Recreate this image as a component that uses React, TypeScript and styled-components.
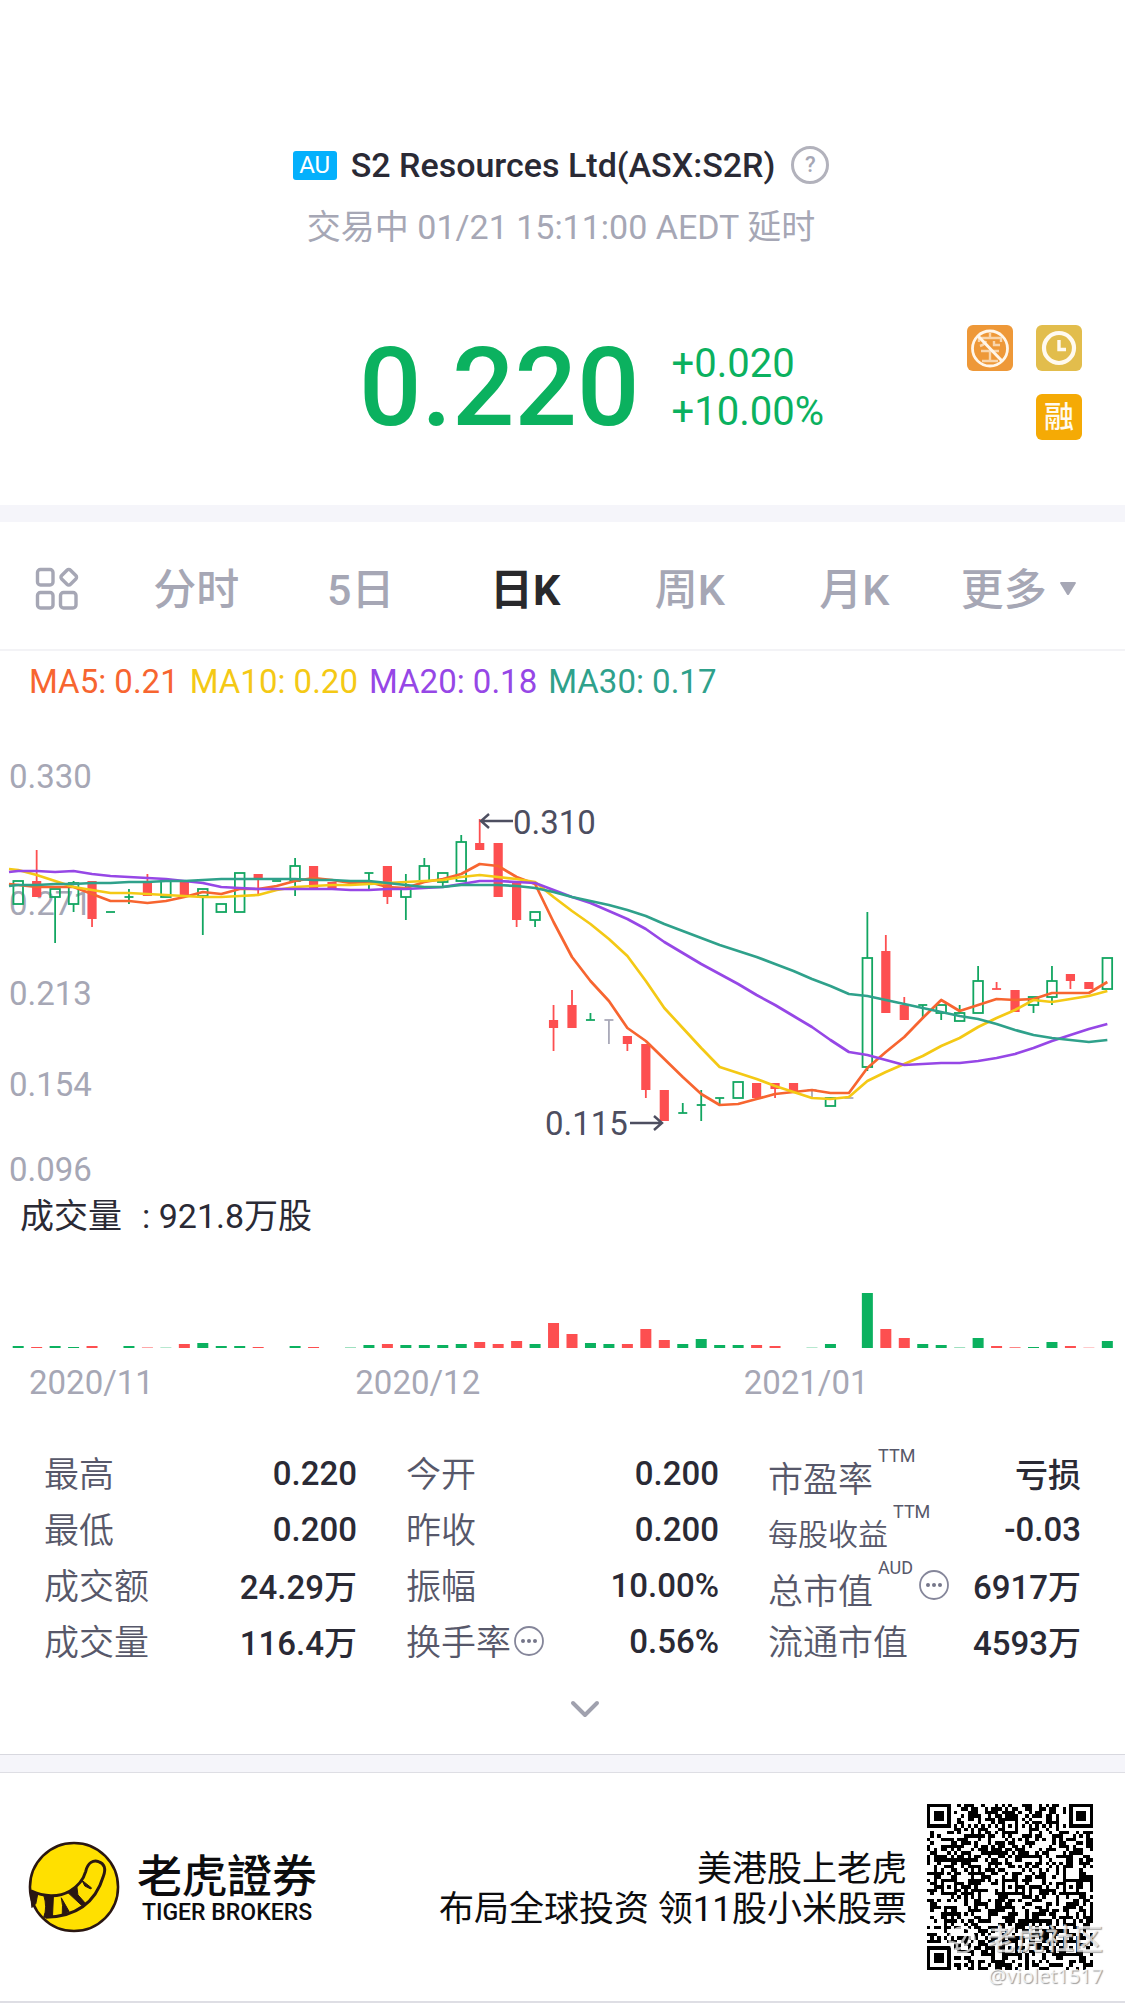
import React from "react";
import styled, { createGlobalStyle, css } from "styled-components";

const color = {
  green: "#0bb15f",
  candleGreen: "#12a661",
  red: "#fd4f50",
  ink: "#2a2a35",
  label: "#57586a",
  muted: "#a6a7b5",
  band: "#f5f5fa",
};

const GlobalStyle = createGlobalStyle`
  * { box-sizing: border-box; }
  body {
    margin: 0;
    background: #fff;
    color: ${color.ink};
    font-family: Roboto, "Noto Sans CJK SC", sans-serif;
    font-size: 33px;
  }
  button {
    font: inherit;
    color: inherit;
    background: none;
    border: 0;
    padding: 0;
    cursor: pointer;
  }
`;

/* ---------- header ---------- */

const Header = styled.header`
  padding: 140px 43px 54px 0;
`;

const TitleRow = styled.div`
  display: flex;
  align-items: center;
  justify-content: center;
  height: 50px;
  padding-left: 40px;
`;

const Market = styled.span`
  width: 44px;
  height: 29px;
  line-height: 29px;
  margin-right: 14px;
  border-radius: 3px;
  background: #04b0fc;
  color: #fff;
  font-size: 24px;
  text-align: center;
`;

const Name = styled.h1`
  margin: 0 16px 0 0;
  font-size: 34px;
  font-weight: 500;
`;

const HelpButton = styled.button`
  width: 38px;
  height: 38px;
  border: 3px solid #b2b2bc;
  border-radius: 50%;
  color: ${color.muted};
  font-size: 22px;
  font-weight: 500;
  line-height: 30px;
`;

const Status = styled.p`
  margin: 15px 0 0;
  padding-left: 40px;
  height: 44px;
  line-height: 44px;
  text-align: center;
  font-size: 34px;
  color: ${color.muted};
`;

const QuoteRow = styled.div`
  display: grid;
  grid-template-columns: 1fr auto 258px;
  align-items: start;
  margin-top: 76px;
`;

const Quote = styled.div`
  grid-column: 2;
  display: flex;
  align-items: center;
  gap: 32px;
  height: 126px;
  color: ${color.green};
`;

const Price = styled.strong`
  font-size: 110px;
  line-height: 126px;
  font-weight: 500;
`;

const Change = styled.div`
  font-size: 40px;
  line-height: 48px;
`;

const Badges = styled.div`
  display: grid;
  grid-template-columns: 46px 46px;
  justify-content: end;
  gap: 23px;
`;

const Badge = styled.button<{ $bg: string; $last?: boolean }>`
  display: grid;
  place-items: center;
  width: 46px;
  height: 46px;
  border-radius: 6px;
  background: ${(p) => p.$bg};
  color: #fffaf0;
  font-size: 30px;
  font-weight: 500;
  line-height: 46px;
  ${(p) => p.$last && css`grid-column: 2;`}
`;

const Band = styled.div<{ $lined?: boolean }>`
  height: ${(p) => (p.$lined ? 19 : 17)}px;
  background: ${color.band};
  ${(p) =>
    p.$lined &&
    css`
      border-top: 1px solid #d8d8df;
      border-bottom: 1px solid #dedee4;
    `}
`;

/* ---------- period tabs ---------- */

const Tabs = styled.nav`
  display: grid;
  grid-template-columns: 114px repeat(6, 1fr);
  padding: 0 24px 0 0;
  height: 129px;
  border-bottom: 2px solid #f3f3f6;
`;

const Tab = styled.button<{ $active?: boolean }>`
  display: flex;
  align-items: center;
  justify-content: center;
  gap: 12px;
  font-size: 43px;
  font-weight: ${(p) => (p.$active ? 700 : 500)};
  color: ${(p) => (p.$active ? "#29292c" : color.muted)};
`;

const IconTab = styled(Tab)`
  padding-top: 6px;
`;

/* ---------- chart ---------- */

const Legend = styled.div`
  display: flex;
  gap: 11px;
  height: 49px;
  padding: 6px 29px 0;
  line-height: 50px;
`;

const LegendItem = styled.span<{ $tone: string }>`
  color: ${(p) => p.$tone};
`;

const Plot = styled.svg`
  display: block;
  width: 100%;
  height: auto;
`;

const PlotText = styled.text<{ $dark?: boolean }>`
  font-size: 33px;
  fill: ${(p) => (p.$dark ? "#4d4e60" : color.muted)};
`;

const VolumeTitle = styled.div`
  display: flex;
  gap: 20px;
  height: 50px;
  padding: 0 20px;
  font-size: 34px;
  line-height: 52px;
`;

const Dates = styled.div`
  display: grid;
  grid-template-columns: 326fr 388fr 381fr;
  padding-left: 29px;
  line-height: 66px;
  color: ${color.muted};
`;

/* ---------- statistics ---------- */

const Stats = styled.section`
  display: grid;
  grid-template-columns: repeat(3, 1fr);
  column-gap: 49px;
  padding: 29px 44px 0;
`;

const StatColumn = styled.dl`
  margin: 0;
`;

const Stat = styled.div`
  display: flex;
  justify-content: space-between;
  align-items: center;
  height: 56px;
`;

const StatLabel = styled.dt`
  display: flex;
  align-items: center;
  height: 56px;
  color: ${color.label};
`;

const StatText = styled.span<{ $lowered?: boolean; $small?: boolean }>`
  font-size: ${(p) => (p.$small ? 30 : 35)}px;
  font-weight: 350;
  padding-top: ${(p) => (p.$lowered ? 6 : 0)}px;
  padding-bottom: ${(p) => (p.$lowered ? 0 : 4)}px;
`;

const Unit = styled.span`
  align-self: flex-start;
  margin: 2px 3px 0 5px;
  font-size: 18px;
  line-height: 18px;
`;

const StatValue = styled.dd`
  margin: 0;
  font-weight: 500;
`;

const MoreButton = styled.button`
  display: grid;
  place-items: center;
  width: 32px;
  height: 32px;
  margin-left: 2px;
`;

const Expand = styled.button`
  display: flex;
  justify-content: center;
  align-items: center;
  width: 100%;
  height: 85px;
  padding: 0 0 5px 44px;
`;

/* ---------- footer ---------- */

const Footer = styled.footer`
  display: flex;
  align-items: center;
  height: 230px;
  padding: 0 32px 0 28px;
  border-bottom: 2px solid #dedee4;
  color: #0c0c0e;
`;

const Brand = styled.div`
  display: grid;
  margin-left: 17px;
  padding-top: 4px;
  justify-items: center;
`;

const BrandName = styled.span`
  font-family: "Noto Sans CJK TC", sans-serif;
  font-size: 45px;
  line-height: 48px;
  font-weight: 500;
`;

const BrandLatin = styled.span`
  font-size: 23px;
  line-height: 30px;
  font-weight: 500;
`;

const Slogan = styled.p`
  flex: 1;
  margin: 0 20px 0 0;
  padding-top: 5px;
  text-align: right;
  font-size: 35px;
  line-height: 40px;
`;

const QrBox = styled.div`
  position: relative;
  width: 166px;
  height: 166px;
`;

const Watermark = styled.div`
  position: absolute;
  right: -10px;
  bottom: -20px;
  display: grid;
  justify-items: end;
  color: rgba(255, 255, 255, 0.72);
  text-shadow: 1px 1px 1px rgba(90, 90, 90, 0.6);
  white-space: nowrap;
`;

const WatermarkName = styled.span`
  display: flex;
  align-items: center;
  gap: 10px;
  font-size: 29px;
  line-height: 44px;
  font-weight: 500;
`;

const WatermarkUser = styled.span`
  font-family: "Noto Sans", sans-serif;
  font-size: 20px;
  line-height: 28px;
`;

/* ---------- data ---------- */

const STEP = 18.46;
const candleX = (i: number) => 18.2 + i * STEP;

// kind, body top, body bottom, wick top, wick bottom
type Candle = ["g" | "r" | "n", number, number, number, number];

const candles: Candle[] = [
  ["g", 881, 904, 881, 904], ["r", 881, 897, 850, 897], ["g", 889, 897, 889, 943],
  ["g", 883, 904, 881, 912], ["r", 881, 919, 881, 927], ["g", 912, 912, 912, 912],
  ["g", 897, 897, 889, 904], ["r", 881, 896, 874, 896], ["g", 881, 897, 881, 897],
  ["r", 881, 896, 881, 896], ["g", 889, 896, 889, 935], ["g", 904, 912, 904, 912],
  ["g", 873, 912, 873, 912], ["r", 874, 880, 874, 896], ["g", 881, 881, 881, 881],
  ["g", 866, 881, 858, 896], ["r", 866, 889, 866, 889], ["r", 882, 889, 882, 889],
  ["g", 881, 881, 881, 881], ["g", 873, 873, 873, 889], ["r", 866, 897, 866, 904],
  ["g", 889, 897, 874, 920], ["g", 866, 881, 858, 881], ["g", 873, 882, 873, 887],
  ["g", 842, 881, 835, 881], ["r", 843, 850, 819, 850], ["r", 843, 897, 843, 897],
  ["r", 882, 920, 882, 927], ["g", 912, 920, 912, 927], ["r", 1020, 1028, 1005, 1051],
  ["r", 1005, 1028, 990, 1028], ["g", 1020, 1020, 1013, 1020], ["n", 1020, 1020, 1020, 1044],
  ["r", 1036, 1044, 1036, 1051], ["r", 1044, 1090, 1044, 1098], ["r", 1090, 1121, 1090, 1121],
  ["g", 1113, 1113, 1103, 1113], ["g", 1105, 1105, 1090, 1121], ["g", 1098, 1098, 1098, 1105],
  ["g", 1082, 1098, 1082, 1098], ["r", 1083, 1098, 1083, 1098], ["r", 1083, 1089, 1083, 1098],
  ["r", 1083, 1092, 1083, 1092], ["n", 1090, 1090, 1090, 1098], ["g", 1098, 1106, 1098, 1106],
  ["n", 1098, 1098, 1098, 1098], ["g", 958, 1067, 912, 1071], ["r", 951, 1013, 935, 1013],
  ["r", 1005, 1020, 997, 1020], ["g", 1005, 1005, 1005, 1019], ["g", 1005, 1013, 1005, 1020],
  ["g", 1013, 1021, 1005, 1021], ["g", 981, 1013, 966, 1013], ["r", 989, 989, 982, 989],
  ["r", 990, 1012, 990, 1012], ["g", 997, 1005, 997, 1013], ["g", 981, 997, 966, 1005],
  ["r", 974, 981, 974, 989], ["r", 982, 989, 982, 989], ["g", 958, 989, 958, 989],
];

const averages = [
  {
    name: "MA5", value: "0.21", tone: "#f76530",
    ys: [884, 885, 887, 887, 887, 894, 901, 901, 903, 901, 897, 892, 894, 889, 889, 886, 881, 878, 880, 883, 882, 887, 888, 882, 879, 874, 864, 866, 877, 884, 922, 957, 981, 1001, 1028, 1041, 1059, 1077, 1094, 1105, 1104, 1099, 1094, 1092, 1090, 1093, 1093, 1068, 1052, 1037, 1018, 1000, 1011, 1005, 999, 1000, 999, 993, 993, 993, 982],
  },
  {
    name: "MA10", value: "0.20", tone: "#f4c915",
    ys: [869, 870, 875, 881, 887, 890, 893, 893, 894, 895, 896, 897, 897, 896, 895, 890, 887, 886, 885, 885, 884, 883, 882, 881, 880, 877, 875, 877, 879, 882, 897, 911, 924, 939, 956, 981, 1008, 1028, 1048, 1067, 1073, 1079, 1086, 1092, 1098, 1099, 1097, 1081, 1072, 1064, 1056, 1046, 1038, 1027, 1018, 1010, 1000, 1002, 999, 996, 991],
  },
  {
    name: "MA20", value: "0.18", tone: "#9647e6",
    ys: [872, 871, 871, 872, 871, 874, 876, 877, 878, 879, 881, 883, 887, 888, 889, 889, 889, 889, 889, 890, 890, 889, 889, 888, 887, 884, 881, 881, 882, 883, 890, 897, 903, 911, 919, 929, 942, 953, 964, 974, 984, 995, 1005, 1016, 1027, 1040, 1052, 1055, 1060, 1065, 1064, 1063, 1063, 1061, 1058, 1054, 1048, 1041, 1035, 1029, 1024],
  },
  {
    name: "MA30", value: "0.17", tone: "#2fa18b",
    ys: [886, 885, 885, 884, 884, 883, 883, 882, 882, 881, 881, 880, 879, 879, 879, 879, 879, 880, 880, 881, 881, 883, 885, 887, 887, 885, 885, 885, 886, 888, 892, 897, 901, 905, 910, 916, 924, 931, 938, 945, 951, 957, 964, 971, 979, 986, 994, 996, 1000, 1004, 1008, 1012, 1016, 1019, 1024, 1030, 1035, 1038, 1040, 1042, 1040],
  },
];

const volumes = [
  2, -1, 2, 1, -2, 0, 2, -0.5, 0.3, -4, 5, 2, 2, -1, 0, 2, -1, 0, 0.4, 3,
  -4, 3, 3, 3, 4, -6, -4, -7, 4, -25, -14, 5, 4, -4, -19, -8, 4, 9, 3, 3,
  -3, -2, 0, 0.3, 4, 0, 55, -19, -10, 4, 3, 0.4, 10, -2, -0.7, 1, 6, -2, -0.3, 7,
];

const axis: [string, number][] = [
  ["0.330", 776], ["0.271", 903], ["0.213", 993], ["0.154", 1084], ["0.096", 1169],
];

const tone = { g: color.candleGreen, r: color.red, n: "#a9a9b8" };

function CandleMark({ index, data }: { index: number; data: Candle }) {
  const [kind, top, bottom, high, low] = data;
  const x = candleX(index);
  const paint = tone[kind];
  const flat = top === bottom;
  return (
    <g stroke={paint} strokeWidth={1.8} fill="none">
      {high < top && <path d={`M${x} ${high}V${top}`} />}
      {low > bottom && <path d={`M${x} ${bottom}V${low}`} />}
      {flat && <path d={`M${x - 4.5} ${top}h9`} />}
      {!flat && kind === "g" && <rect x={x - 4.8} y={top} width={9.6} height={bottom - top} />}
      {!flat && kind === "r" && (
        <rect x={x - 4.6} y={top} width={9.2} height={bottom - top} fill={paint} stroke="none" />
      )}
    </g>
  );
}

function PriceChart() {
  return (
    <Plot viewBox="0 700 1125 490" role="img" aria-label="日K">
      {axis.map(([text, y]) => (
        <PlotText key={text} x={9} y={y + 12}>{text}</PlotText>
      ))}
      {candles.map((c, i) => <CandleMark key={i} index={i} data={c} />)}
      {averages.map((m) => (
        <polyline
          key={m.name}
          points={m.ys.map((y, i) => `${i === 0 ? 9 : candleX(i - 1)},${y}`).join(" ")}
          fill="none"
          stroke={m.tone}
          strokeWidth={2.7}
          strokeLinejoin="round"
        />
      ))}
      <g fill="none" stroke="#4d4e60" strokeWidth={2.4}>
        <path d="M513 821H481M489 814l-8 7 8 7" />
        <path d="M630 1123h32M654 1116l8 7-8 7" />
      </g>
      <PlotText $dark x={513} y={834}>0.310</PlotText>
      <PlotText $dark x={545} y={1135}>0.115</PlotText>
    </Plot>
  );
}

function VolumeChart() {
  return (
    <Plot viewBox="0 0 1125 110" role="img" aria-label="成交量">
      {volumes.map((v, i) => (
        <rect
          key={i}
          x={candleX(i) - 5.5}
          y={108 - Math.abs(v)}
          width={11}
          height={Math.abs(v)}
          fill={v < 0 ? color.red : color.green}
        />
      ))}
    </Plot>
  );
}

/* ---------- icons ---------- */

const GridIcon = () => (
  <svg width="46" height="46" viewBox="0 0 46 46" fill="none" stroke={color.muted} strokeWidth="3.4">
    <rect x="3.5" y="3.5" width="15.5" height="15.5" rx="3" />
    <rect x="3.5" y="26.5" width="15.5" height="15.5" rx="3" />
    <rect x="26.5" y="26.5" width="15.5" height="15.5" rx="3" />
    <rect x="28.5" y="5" width="12.500" height="12.500" rx="2.500" transform="rotate(45 34.750 11.250)" />
  </svg>
);

const NoShortIcon = () => (
  <svg width="46" height="46" viewBox="0 0 46 46" fill="none" stroke="#fff6ea">
    <g strokeWidth="2.4" opacity="0.65">
      <path d="M23 8v4M12 17v-4h22v4M19 16c-1 3-3 4-6 5M27 16v4h6M14 26h18M23 26v10M15 36h16" />
    </g>
    <circle cx="23" cy="23.500" r="17.500" strokeWidth="2.800" />
    <path d="M11 11l24 25" strokeWidth="3" />
  </svg>
);

const ClockIcon = () => (
  <svg width="46" height="46" viewBox="0 0 46 46" fill="none" stroke="#fffaf0">
    <circle cx="23" cy="23" r="15" strokeWidth="4.200" />
    <path d="M23 15v9.500h7" strokeWidth="3.400" />
  </svg>
);

const DotsIcon = () => (
  <svg width="32" height="32" viewBox="0 0 32 32">
    <circle cx="16" cy="16" r="14" fill="none" stroke="#85869a" strokeWidth="1.800" />
    <g fill="#75768a">
      <circle cx="10" cy="16" r="2" />
      <circle cx="16" cy="16" r="2" />
      <circle cx="22" cy="16" r="2" />
    </g>
  </svg>
);

const TigerLogo = () => (
  <svg width="92" height="92" viewBox="0 0 94 94">
    <circle cx="47" cy="47" r="45" fill="#ffe000" stroke="#2a1712" strokeWidth="2.600" />
    <path
      d="M3 51C16 57 31 58 43 51C53 45 57 38 59 31C61 22 67 19 72 21C78 23 80 28 77 36C71 56 56 77 18 78"
      fill="none" stroke="#2a1712" strokeWidth="3"
    />
    <path
      d="M2 50l8 4-2 10-4 4zM16 55l10 1-1 22h-9q4-10 0-23zM34 58l8 14-7 3q1-10-1-17zM41 53l9-6 1 8 8 9-4 2zM55 40l10 8-1 1-6-3z"
      fill="#2a1712" stroke="#2a1712" strokeWidth="1" strokeLinejoin="round"
    />
  </svg>
);

const QR_SIZE = 49;

function qrPath() {
  let seed = 20210121;
  const random = () => {
    seed = (seed * 1103515245 + 12345) % 2147483648;
    return seed / 2147483648;
  };
  const ring = (dx: number, dy: number, half: number) => {
    const d = Math.max(Math.abs(dx), Math.abs(dy));
    return d > half ? null : d !== half - 1;
  };
  const finders = [[3, 3], [45, 3], [3, 45]];
  const alignments = [[24, 6], [6, 24], [24, 24], [42, 24], [24, 42], [42, 42]];
  let d = "";
  for (let y = 0; y < QR_SIZE; y++) {
    for (let x = 0; x < QR_SIZE; x++) {
      let dark = random() < 0.5;
      if (y === 6 || x === 6) dark = (x + y) % 2 === 0;
      for (const [cx, cy] of alignments) {
        const r = ring(x - cx, y - cy, 2);
        if (r !== null) dark = r;
      }
      for (const [cx, cy] of finders) {
        const m = Math.max(Math.abs(x - cx), Math.abs(y - cy));
        if (m <= 4) dark = m === 3 || m <= 1;
      }
      if (dark) d += `M${x} ${y}h1v1h-1z`;
    }
  }
  return d;
}

const QrCode = () => (
  <svg width="166" height="166" viewBox={`0 0 ${QR_SIZE} ${QR_SIZE}`} shapeRendering="crispEdges">
    <path d={qrPath()} fill="#000" />
  </svg>
);

/* ---------- page ---------- */

type StatItem = { label: string; value: string; unit?: string; small?: boolean; info?: boolean };

const stats: StatItem[][] = [
  [
    { label: "最高", value: "0.220" },
    { label: "最低", value: "0.200" },
    { label: "成交额", value: "24.29万" },
    { label: "成交量", value: "116.4万" },
  ],
  [
    { label: "今开", value: "0.200" },
    { label: "昨收", value: "0.200" },
    { label: "振幅", value: "10.00%" },
    { label: "换手率", value: "0.56%", info: true },
  ],
  [
    { label: "市盈率", value: "亏损", unit: "TTM" },
    { label: "每股收益", value: "-0.03", unit: "TTM", small: true },
    { label: "总市值", value: "6917万", unit: "AUD", info: true },
    { label: "流通市值", value: "4593万" },
  ],
];

const periods = ["分时", "5日", "日K", "周K", "月K"];

export default function App() {
  return (
    <>
      <GlobalStyle />
      <Header>
        <TitleRow>
          <Market>AU</Market>
          <Name>S2 Resources Ltd(ASX:S2R)</Name>
          <HelpButton aria-label="帮助">?</HelpButton>
        </TitleRow>
        <Status>交易中 01/21 15:11:00 AEDT 延时</Status>
        <QuoteRow>
          <Quote>
            <Price>0.220</Price>
            <Change>
              <div>+0.020</div>
              <div>+10.00%</div>
            </Change>
          </Quote>
          <Badges>
            <Badge $bg="#ee9838" aria-label="不可卖空"><NoShortIcon /></Badge>
            <Badge $bg="#e2bd4c" aria-label="延时行情"><ClockIcon /></Badge>
            <Badge $bg="#f5aa05" $last>融</Badge>
          </Badges>
        </QuoteRow>
      </Header>
      <Band />
      <Tabs>
        <IconTab aria-label="指标"><GridIcon /></IconTab>
        {periods.map((p) => (
          <Tab key={p} $active={p === "日K"}>{p}</Tab>
        ))}
        <Tab>
          更多
          <svg width="18" height="22" viewBox="0 0 18 22">
            <path d="M2 7h14q1.500 0 .7 1.500L10 19.500q-1 1-2 0L1.300 8.500Q.5 7 2 7z" fill={color.muted} />
          </svg>
        </Tab>
      </Tabs>
      <Legend>
        {averages.map((m) => (
          <LegendItem key={m.name} $tone={m.tone}>{`${m.name}: ${m.value}`}</LegendItem>
        ))}
      </Legend>
      <PriceChart />
      <VolumeTitle>
        <span>成交量</span>
        <span>: 921.8万股</span>
      </VolumeTitle>
      <VolumeChart />
      <Dates>
        <span>2020/11</span>
        <span>2020/12</span>
        <span>2021/01</span>
      </Dates>
      <Stats>
        {stats.map((column, i) => (
          <StatColumn key={i}>
            {column.map((s) => (
              <Stat key={s.label}>
                <StatLabel>
                  <StatText $lowered={!!s.unit} $small={s.small}>{s.label}</StatText>
                  {s.unit && <Unit>{s.unit}</Unit>}
                  {s.info && <MoreButton aria-label={`${s.label}说明`}><DotsIcon /></MoreButton>}
                </StatLabel>
                <StatValue>{s.value}</StatValue>
              </Stat>
            ))}
          </StatColumn>
        ))}
      </Stats>
      <Expand aria-label="展开">
        <svg width="30" height="20" viewBox="0 0 30 20" fill="none" stroke="#a0a1ae" strokeWidth="4" strokeLinecap="round" strokeLinejoin="round">
          <path d="M3 4l12 12L27 4" />
        </svg>
      </Expand>
      <Band $lined />
      <Footer>
        <TigerLogo />
        <Brand>
          <BrandName>老虎證券</BrandName>
          <BrandLatin>TIGER BROKERS</BrandLatin>
        </Brand>
        <Slogan>
          美港股上老虎
          <br />
          布局全球投资 领11股小米股票
        </Slogan>
        <QrBox>
          <QrCode />
          <Watermark>
            <WatermarkName>
              <svg width="30" height="30" viewBox="0 0 30 30" fill="none" stroke="currentColor" strokeWidth="2.500">
                <circle cx="15" cy="15" r="12.500" />
                <path d="M4 17q10 4 14-5 3-6 5 0-2 12-15 12M10 18v7M15 16l3 6" />
              </svg>
              老虎社区
            </WatermarkName>
            <WatermarkUser>@violet1517</WatermarkUser>
          </Watermark>
        </QrBox>
      </Footer>
    </>
  );
}
